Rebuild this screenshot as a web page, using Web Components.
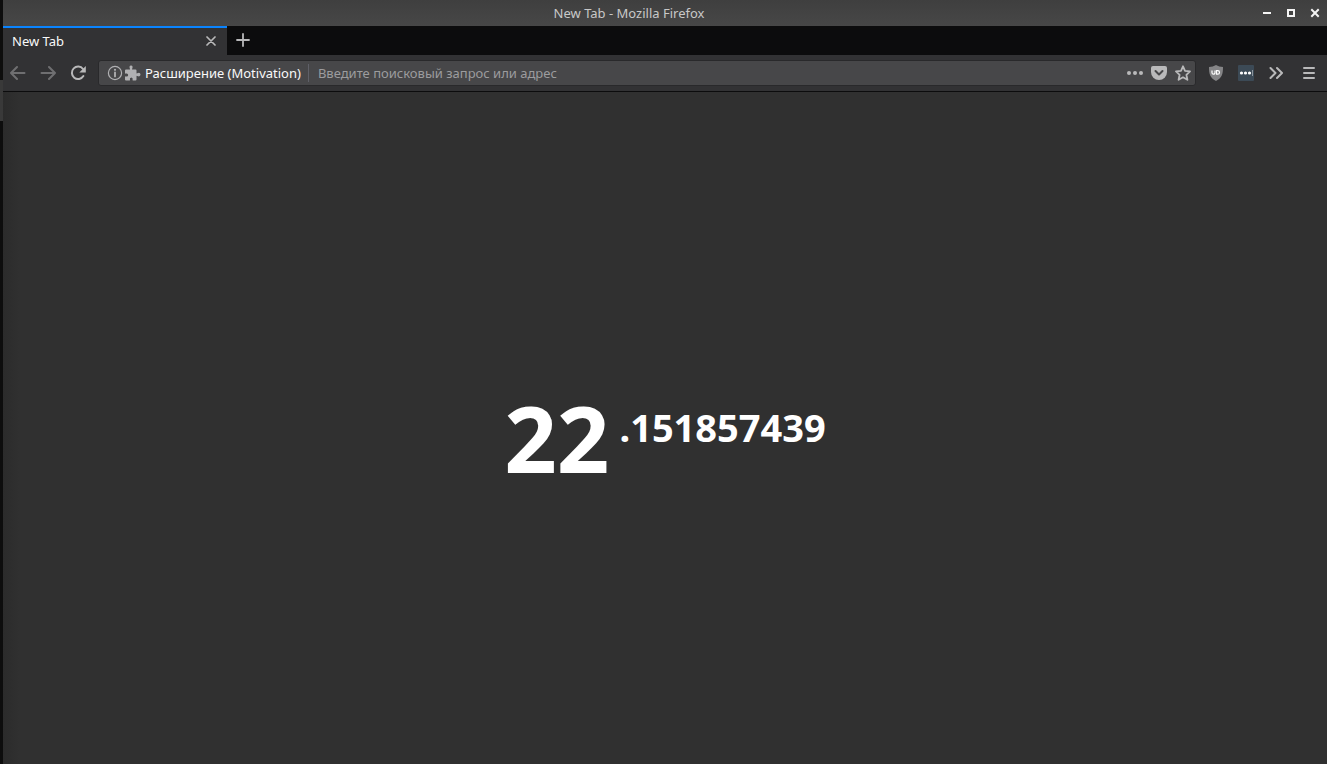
<!DOCTYPE html>
<html lang="ru">
<head>
<meta charset="utf-8">
<title>New Tab - Mozilla Firefox</title>
<style>
html, body { height: 100%; margin: 0; }
body { background: #0d0d0d; font: 13px/20px "Noto Sans", "Open Sans", sans-serif; color: #f9f9fa; overflow: hidden; }
</style>
</head>
<body>
<browser-window></browser-window>
<script>
const define = (name, markup) => {
  const template = document.createElement('template');
  template.innerHTML = markup;
  customElements.define(name, class extends HTMLElement {
    constructor() {
      super();
      this.attachShadow({ mode: 'open' }).append(template.content.cloneNode(true));
    }
  });
};

customElements.define('icon-button', class extends HTMLElement {
  constructor() {
    super();
    const root = this.attachShadow({ mode: 'open' });
    root.innerHTML = `<style>
      :host { display: inline-flex; flex: none; width: 30px; height: 28px; color: #b9b9ba; }
      :host([dim]) { color: #6f6f71; }
      :host([small]) { width: 24px; height: 24px; }
      button { all: unset; display: flex; width: 100%; align-items: center; justify-content: center; color: inherit; }
      ::slotted(svg) { display: block; flex: none; }
    </style><button type="button"><slot></slot></button>`;
    root.querySelector('button').setAttribute('aria-label', this.getAttribute('label') || '');
  }
});

define('title-bar', `<style>
  :host { display: flex; align-items: center; height: 26px; background: linear-gradient(#3f3f3f, #474747); color: #c8c8c8; }
  .title { flex: 1; text-align: center; }
  .controls { display: flex; }
  icon-button { color: #f4f4f4; }
</style>
<div class="title"><slot></slot></div>
<div class="controls">
  <icon-button small label="Minimize"><svg width="10" height="10" shape-rendering="crispEdges"><path d="M1 4h8v2H1z" fill="currentColor"/></svg></icon-button>
  <icon-button small label="Maximize"><svg width="10" height="10" shape-rendering="crispEdges"><path d="M2 2h6v6H2z" fill="none" stroke="currentColor" stroke-width="2"/></svg></icon-button>
  <icon-button small label="Close window"><svg width="10" height="10"><path d="M2 2l6 6M8 2L2 8" stroke="currentColor" stroke-width="2" stroke-linecap="square"/></svg></icon-button>
</div>`);

define('browser-tab', `<style>
  :host { display: flex; align-items: center; box-sizing: border-box; width: 224px; height: 29px; padding: 0 4px 2px 9px; background: #323234; border-top: 2px solid #0a84ff; }
  .label { flex: 1; }
</style>
<span class="label"><slot></slot></span>
<icon-button small label="Close tab"><svg width="10" height="10"><path d="M1 1l8 8M9 1L1 9" stroke="currentColor" stroke-width="1.7" stroke-linecap="round"/></svg></icon-button>`);

define('tab-strip', `<style>
  :host { display: flex; gap: 1px; height: 29px; background: #0c0c0d; }
</style>
<slot></slot>
<icon-button label="New tab"><svg width="14" height="14"><path d="M7 1v12M1 7h12" stroke="currentColor" stroke-width="1.8" stroke-linecap="round"/></svg></icon-button>`);

define('address-bar', `<style>
  :host { display: flex; align-items: center; flex: 1; box-sizing: border-box; height: 26px; min-width: 0; margin: 0 5px; padding: 0 0 0 8px; background: #474749; border: 1px solid #29292b; border-radius: 3px; }
  svg { display: block; flex: none; }
  .identity { display: flex; align-items: center; gap: 2px; height: 18px; padding-right: 7px; border-right: 1px solid #5f6068; color: #b1b1b3; white-space: nowrap; }
  label { color: #f9f9fa; margin-left: 2px; }
  input { all: unset; flex: 1; min-width: 0; margin-left: 9px; height: 20px; color: #f9f9fa; }
  input::placeholder { color: #9c9c9e; opacity: 1; }
</style>
<div class="identity">
  <svg width="16" height="16" viewBox="0 0 16 16"><circle cx="8" cy="8" r="6.6" fill="none" stroke="currentColor" stroke-width="1.2"/><path d="M8 7.4v4" stroke="currentColor" stroke-width="1.8" stroke-linecap="round"/><circle cx="8" cy="4.8" r="1.1" fill="currentColor"/></svg>
  <svg width="16" height="16" viewBox="0 0 16 16" fill="currentColor"><path d="M0 5.500Q0 4.500 1 4.500H4.500Q5.300 4.500 5 3.900Q3.600 .8 6 .5Q8.500 .8 7.100 3.900Q6.800 4.500 7.500 4.500H10.500Q11.500 4.500 11.500 5.500V8Q11.500 8.800 12.200 8.300Q15.300 7 15.500 9.600Q15.300 12.300 12.200 10.900Q11.500 10.500 11.500 11.200V14.500Q11.500 15.500 10.500 15.500H8Q7.300 15.500 7.600 14.700Q8.200 12.700 6.300 12.500Q4.300 12.700 5 14.700Q5.300 15.500 4.600 15.500H1Q0 15.500 0 14.500V11.800Q0 11.100 .7 11.400Q3 12 3.200 10Q3 7.900 .7 8.600Q0 8.900 0 8.200Z"/></svg>
  <label for="address"><slot></slot></label>
</div>
<input id="address" type="text" placeholder="Введите поисковый запрос или адрес">
<icon-button small label="Page actions"><svg width="16" height="16" fill="currentColor"><circle cx="2" cy="8" r="2"/><circle cx="8" cy="8" r="2"/><circle cx="14" cy="8" r="2"/></svg></icon-button>
<icon-button small label="Save to Pocket"><svg width="16" height="16"><path d="M2 1h12q2 0 2 2v4a8 8 0 0 1-16 0V3q0-2 2-2z" fill="currentColor"/><path d="M4.500 6L8 9.500 11.500 6" fill="none" stroke="#474749" stroke-width="2" stroke-linecap="round" stroke-linejoin="round"/></svg></icon-button>
<icon-button small label="Bookmark"><svg width="16" height="16"><path d="M8 1.300l2 4.500 5 .6-3.600 3.400 1 5L8 12.300l-4.400 2.500 1-5L1 6.400l5-.6z" fill="none" stroke="currentColor" stroke-width="1.8" stroke-linejoin="round"/></svg></icon-button>`);

define('nav-toolbar', `<style>
  :host { display: flex; align-items: center; height: 36px; background: #323234; border-bottom: 1px solid #0c0c0d; }
  .menu { margin: 0 3px; }
</style>
<icon-button dim label="Back"><svg width="16" height="16"><path d="M14.500 8H1M7 2L1 8l6 6" fill="none" stroke="currentColor" stroke-width="2" stroke-linecap="round" stroke-linejoin="round"/></svg></icon-button>
<icon-button dim label="Forward"><svg width="16" height="16"><path d="M1.500 8H15M9 2l6 6-6 6" fill="none" stroke="currentColor" stroke-width="2" stroke-linecap="round" stroke-linejoin="round"/></svg></icon-button>
<icon-button label="Reload"><svg width="16" height="16"><path d="M13 4A6.200 6.200 0 1 0 13.400 11" fill="none" stroke="currentColor" stroke-width="2" stroke-linecap="round"/><path d="M15.800 1v6.500H9.300z" fill="currentColor"/></svg></icon-button>
<address-bar><slot></slot></address-bar>
<icon-button label="uBlock"><svg width="16" height="16"><path d="M8 0q3 2 7 2c0 7-1 11-7 14C2 13 1 9 1 2q4 0 7-2z" fill="#858587"/><path d="M4 5.500v2.200a1.500 1.500 0 0 0 3 0V5.500" fill="none" stroke="#fff" stroke-width="1.200"/><path d="M8.500 5.600v3.600h1.200a1.800 1.800 0 0 0 0-3.600z" fill="none" stroke="#fff" stroke-width="1.200"/></svg></icon-button>
<icon-button label="Passwords"><svg width="16" height="16"><rect width="16" height="16" rx="1" fill="#3c4a56"/><g fill="#fff"><circle cx="3.500" cy="8" r="1.600"/><circle cx="7.500" cy="8" r="1.600"/><circle cx="11.500" cy="8" r="1.600"/></g><path d="M14.500 5v6" stroke="#8d969e"/></svg></icon-button>
<icon-button label="More tools"><svg width="16" height="16"><path d="M2.500 3l5 5-5 5M9 3l5 5-5 5" fill="none" stroke="currentColor" stroke-width="2" stroke-linecap="round" stroke-linejoin="round"/></svg></icon-button>
<icon-button class="menu" label="Menu"><svg width="16" height="16"><path d="M3 3h10M3 8h10M3 13h10" stroke="currentColor" stroke-width="2" stroke-linecap="round"/></svg></icon-button>`);

define('age-counter', `<style>
  :host { display: flex; flex: 1; align-items: center; justify-content: center; background: linear-gradient(90deg, #2b2b2b, #303030 16px); color: #fff; font-weight: 700; }
  .age { display: flex; align-items: flex-start; gap: 10px; padding-top: 20px; }
  .years { font-size: 92px; line-height: 96px; }
  .fraction { font-size: 38px; line-height: 74px; }
</style>
<div class="age"><span class="years"><slot name="years"></slot></span><span class="fraction"><slot name="fraction"></slot></span></div>`);

define('browser-window', `<style>
  :host { display: flex; flex-direction: column; box-sizing: border-box; height: 100%; padding-left: 3px; background: linear-gradient(#0d0d0d 80px, #393939 80px, #393939 121px, #0d0d0d 121px); }
</style>
<title-bar>New Tab - Mozilla Firefox</title-bar>
<tab-strip><browser-tab>New Tab</browser-tab></tab-strip>
<nav-toolbar>Расширение (Motivation)</nav-toolbar>
<age-counter><span slot="years">22</span><span slot="fraction">.151857439</span></age-counter>`);
</script>
</body>
</html>
